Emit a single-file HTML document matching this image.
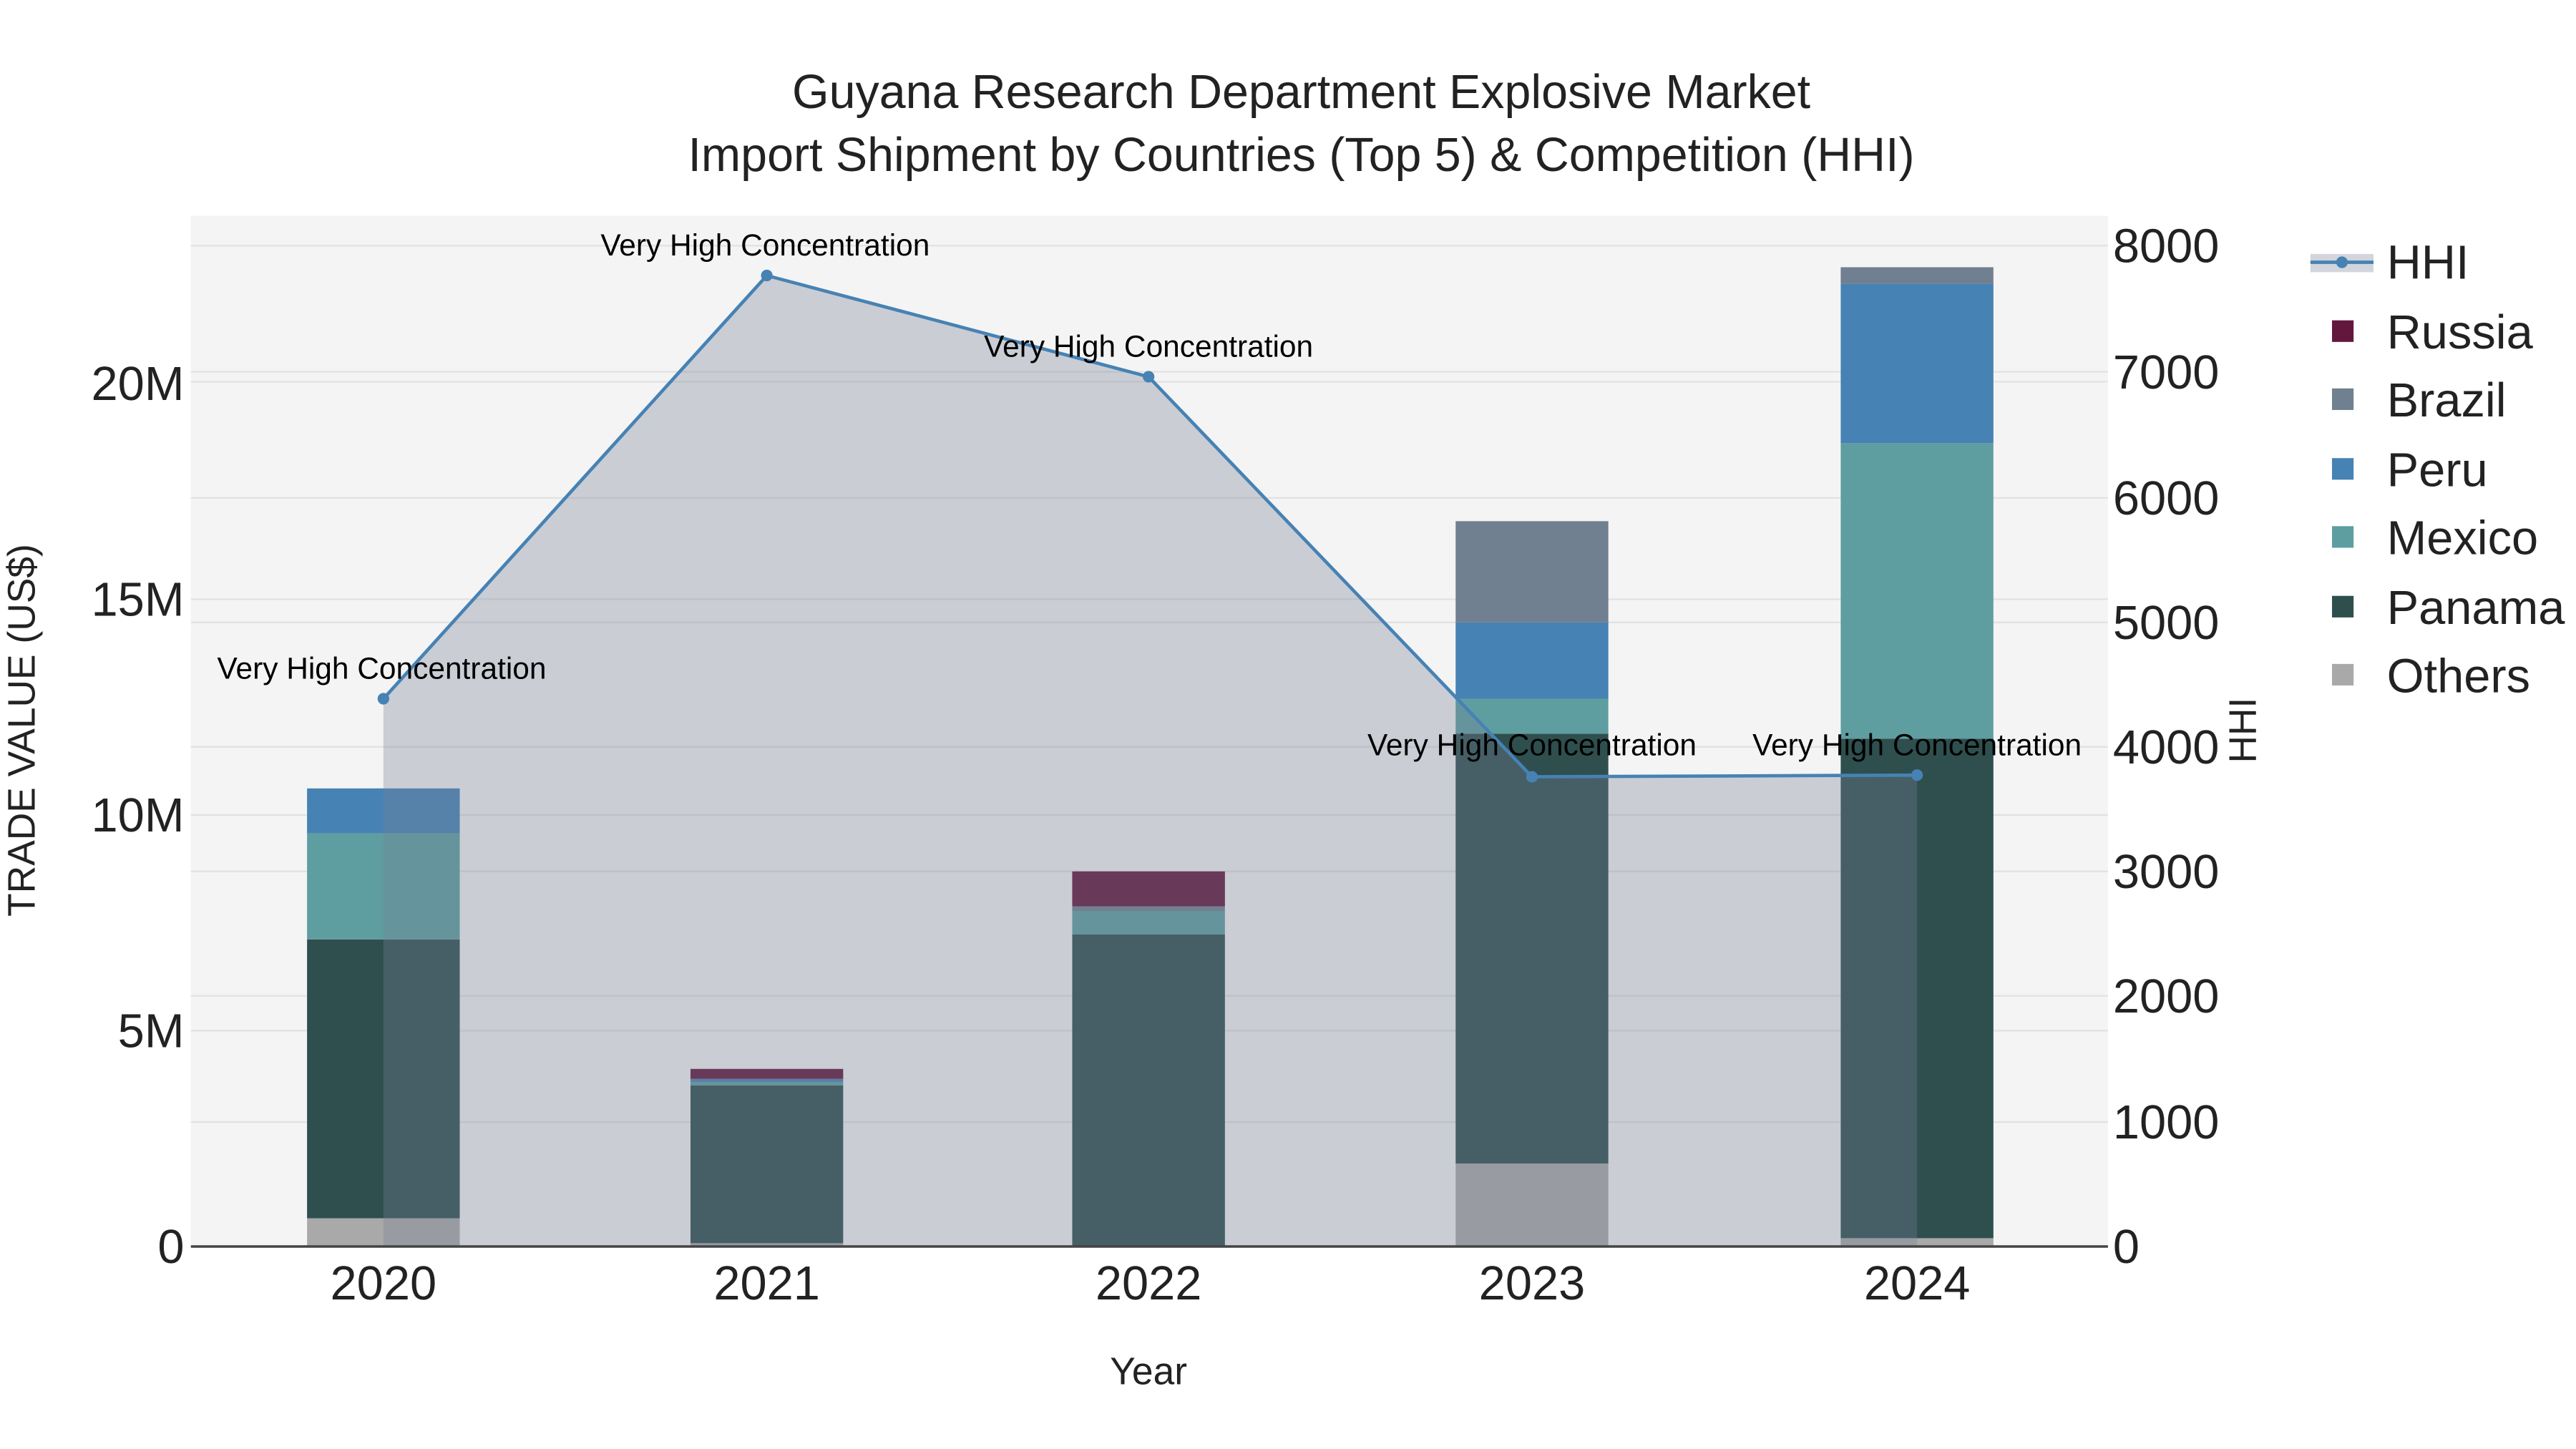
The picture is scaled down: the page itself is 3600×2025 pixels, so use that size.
<!DOCTYPE html>
<html><head><meta charset="utf-8"><style>html,body{margin:0;padding:0;background:#fff}svg{display:block}text{font-family:"Liberation Sans",sans-serif}</style></head><body>
<svg width="3600" height="2025" viewBox="0 0 1552 873" xmlns="http://www.w3.org/2000/svg">
<rect x="0" y="0" width="1552" height="873" fill="#fff"/>
<rect x="115" y="130" width="1155" height="621" fill="#f4f4f4"/>
<g stroke="#e2e2e2" stroke-width="1">
<line x1="115" x2="1270" y1="621" y2="621"/><line x1="115" x2="1270" y1="491" y2="491"/><line x1="115" x2="1270" y1="361" y2="361"/><line x1="115" x2="1270" y1="230" y2="230"/>
<line x1="115" x2="1270" y1="676" y2="676"/><line x1="115" x2="1270" y1="600" y2="600"/><line x1="115" x2="1270" y1="525" y2="525"/><line x1="115" x2="1270" y1="450" y2="450"/><line x1="115" x2="1270" y1="375" y2="375"/><line x1="115" x2="1270" y1="300" y2="300"/><line x1="115" x2="1270" y1="224" y2="224"/><line x1="115" x2="1270" y1="148" y2="148"/>
</g>
<g>
<rect x="185" y="734" width="92" height="17" fill="#a9a9a9"/>
<rect x="185" y="566" width="92" height="168" fill="#2f4f4f"/>
<rect x="185" y="502" width="92" height="64" fill="#5f9ea0"/>
<rect x="185" y="475" width="92" height="27" fill="#4682b4"/>

<rect x="416" y="749" width="92" height="2" fill="#a9a9a9"/>
<rect x="416" y="654" width="92" height="95" fill="#2f4f4f"/>
<rect x="416" y="652" width="92" height="2" fill="#5f9ea0"/>
<rect x="416" y="650" width="92" height="2" fill="#4682b4"/>
<rect x="416" y="644" width="92" height="6" fill="#63173d"/>

<rect x="646" y="563" width="92" height="188" fill="#2f4f4f"/>
<rect x="646" y="549" width="92" height="14" fill="#5f9ea0"/>
<rect x="646" y="546" width="92" height="3" fill="#708090"/>
<rect x="646" y="525" width="92" height="21" fill="#63173d"/>

<rect x="877" y="701" width="92" height="50" fill="#a9a9a9"/>
<rect x="877" y="442" width="92" height="259" fill="#2f4f4f"/>
<rect x="877" y="421" width="92" height="21" fill="#5f9ea0"/>
<rect x="877" y="375" width="92" height="46" fill="#4682b4"/>
<rect x="877" y="314" width="92" height="61" fill="#708090"/>

<rect x="1109" y="746" width="92" height="5" fill="#a9a9a9"/>
<rect x="1109" y="445" width="92" height="301" fill="#2f4f4f"/>
<rect x="1109" y="267" width="92" height="178" fill="#5f9ea0"/>
<rect x="1109" y="171" width="92" height="96" fill="#4682b4"/>
<rect x="1109" y="161" width="92" height="10" fill="#708090"/>
</g>
<polygon points="231,751 231,421 462,166 692,227 923,468 1155,467 1155,751" fill="rgb(117,129,149)" fill-opacity="0.33"/>
<polyline points="231,421 462,166 692,227 923,468 1155,467" fill="none" stroke="#4682b4" stroke-width="2"/>
<g fill="#4682b4"><circle cx="231" cy="421" r="3.5"/><circle cx="462" cy="166" r="3.5"/><circle cx="692" cy="227" r="3.5"/><circle cx="923" cy="468" r="3.5"/><circle cx="1155" cy="467" r="3.5"/></g>
<line x1="115" x2="1270" y1="751" y2="751" stroke="#444" stroke-width="1.5"/>
<g font-size="18.3" text-anchor="middle" fill="#000">
<text x="230" y="409">Very High Concentration</text>
<text x="461" y="154">Very High Concentration</text>
<text x="692" y="215">Very High Concentration</text>
<text x="923" y="455">Very High Concentration</text>
<text x="1155" y="455">Very High Concentration</text>
</g>
<g font-size="28.8" fill="#222" text-anchor="end">
<text x="111" y="761">0</text><text x="111" y="631">5M</text><text x="111" y="501">10M</text><text x="111" y="371">15M</text><text x="111" y="241">20M</text>
</g>
<g font-size="28.8" fill="#222">
<text x="1273" y="761">0</text><text x="1273" y="686">1000</text><text x="1273" y="610">2000</text><text x="1273" y="535">3000</text><text x="1273" y="460">4000</text><text x="1273" y="385">5000</text><text x="1273" y="310">6000</text><text x="1273" y="234">7000</text><text x="1273" y="158">8000</text>
</g>
<g font-size="28.8" fill="#222" text-anchor="middle">
<text x="231" y="783">2020</text><text x="462" y="783">2021</text><text x="692" y="783">2022</text><text x="923" y="783">2023</text><text x="1155" y="783">2024</text>
</g>
<text x="692" y="834" font-size="23" text-anchor="middle" fill="#222">Year</text>
<text transform="translate(21,440) rotate(-90)" font-size="23" text-anchor="middle" fill="#222">TRADE VALUE (US$)</text>
<text transform="translate(1359,440) rotate(-90)" font-size="23" text-anchor="middle" fill="#222">HHI</text>
<g font-size="28.6" fill="#222" text-anchor="middle">
<text x="784" y="65">Guyana Research Department Explosive Market</text>
<text x="784" y="103">Import Shipment by Countries (Top 5) &amp; Competition (HHI)</text>
</g>
<rect x="1392" y="153" width="38" height="11" fill="rgb(117,129,149)" fill-opacity="0.33"/>
<line x1="1392" x2="1430" y1="158" y2="158" stroke="#4682b4" stroke-width="2"/>
<circle cx="1411" cy="158" r="3.5" fill="#4682b4"/>
<rect x="1405" y="193" width="13" height="13" fill="#63173d"/>
<rect x="1405" y="234" width="13" height="13" fill="#708090"/>
<rect x="1405" y="276" width="13" height="13" fill="#4682b4"/>
<rect x="1405" y="317" width="13" height="13" fill="#5f9ea0"/>
<rect x="1405" y="359" width="13" height="13" fill="#2f4f4f"/>
<rect x="1405" y="400" width="13" height="13" fill="#a9a9a9"/>
<g font-size="28.8" fill="#222">
<text x="1438" y="168">HHI</text><text x="1438" y="210">Russia</text><text x="1438" y="251">Brazil</text><text x="1438" y="293">Peru</text><text x="1438" y="334">Mexico</text><text x="1438" y="376">Panama</text><text x="1438" y="417">Others</text>
</g>
</svg>
</body></html>
